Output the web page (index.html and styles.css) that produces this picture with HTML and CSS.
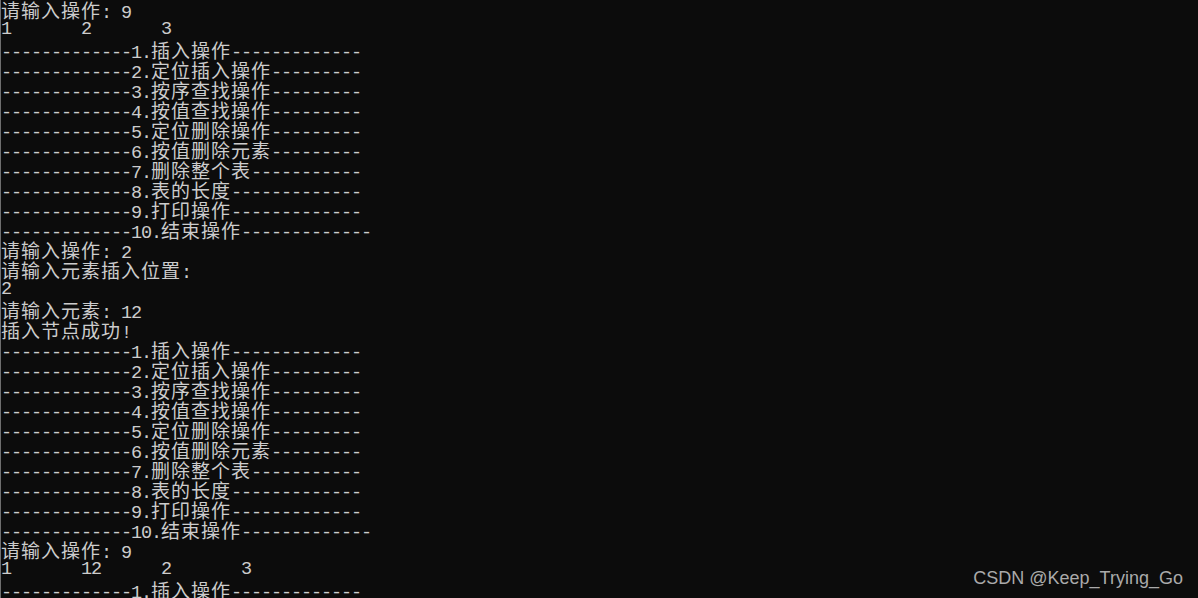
FILE: index.html
```html
<!DOCTYPE html>
<html lang="zh-CN">
<head>
    <meta charset="UTF-8">
    <title>控制台</title>
    <link rel="stylesheet" href="styles.css">
</head>
<body>
    <div class="console">
        <div class="line"><span class="cn">请输入操作</span>: 9</div>
        <div class="line">1       2       3</div>
        <!-- menu -->
        <div class="line">-------------1.<span class="cn">插入操作</span>-------------</div>
        <div class="line">-------------2.<span class="cn">定位插入操作</span>---------</div>
        <div class="line">-------------3.<span class="cn">按序查找操作</span>---------</div>
        <div class="line">-------------4.<span class="cn">按值查找操作</span>---------</div>
        <div class="line">-------------5.<span class="cn">定位删除操作</span>---------</div>
        <div class="line">-------------6.<span class="cn">按值删除元素</span>---------</div>
        <div class="line">-------------7.<span class="cn">删除整个表</span>-----------</div>
        <div class="line">-------------8.<span class="cn">表的长度</span>-------------</div>
        <div class="line">-------------9.<span class="cn">打印操作</span>-------------</div>
        <div class="line">-------------10.<span class="cn">结束操作</span>-------------</div>
        <div class="line"><span class="cn">请输入操作</span>: 2</div>
        <div class="line"><span class="cn">请输入元素插入位置</span>:</div>
        <div class="line">2</div>
        <div class="line"><span class="cn">请输入元素</span>: 12</div>
        <div class="line"><span class="cn">插入节点成功</span>!</div>
        <!-- menu again -->
        <div class="line">-------------1.<span class="cn">插入操作</span>-------------</div>
        <div class="line">-------------2.<span class="cn">定位插入操作</span>---------</div>
        <div class="line">-------------3.<span class="cn">按序查找操作</span>---------</div>
        <div class="line">-------------4.<span class="cn">按值查找操作</span>---------</div>
        <div class="line">-------------5.<span class="cn">定位删除操作</span>---------</div>
        <div class="line">-------------6.<span class="cn">按值删除元素</span>---------</div>
        <div class="line">-------------7.<span class="cn">删除整个表</span>-----------</div>
        <div class="line">-------------8.<span class="cn">表的长度</span>-------------</div>
        <div class="line">-------------9.<span class="cn">打印操作</span>-------------</div>
        <div class="line">-------------10.<span class="cn">结束操作</span>-------------</div>
        <div class="line"><span class="cn">请输入操作</span>: 9</div>
        <div class="line">1       12      2       3</div>
        <div class="line">-------------1.<span class="cn">插入操作</span>-------------</div>
    </div>
    <div class="watermark">CSDN @Keep_Trying_Go</div>
</body>
</html>
```

FILE: styles.css
```css
/* console window */
html, body {
    height: 100%;
}
body {
    margin: 0;
    background: #0c0c0c;
    overflow: hidden;
}
.console {
    height: 100%;
    border-left: 1px solid #6e6e6e;
    font-family: "Liberation Mono", monospace;
    font-size: 18.5px;
    letter-spacing: -1.1px;
    color: #cccccc;
}
.line {
    height: 20px;
    line-height: 20px;
    white-space: pre;
}
.cn {
    font-family: "Noto Sans CJK SC", sans-serif;
    font-size: 19px;
    letter-spacing: 1px;
    line-height: 20px;
}
/* CSDN watermark */
.watermark {
    position: absolute;
    right: 15px;
    bottom: 9px;
    font-family: "Liberation Sans", Arial, sans-serif;
    font-size: 18px;
    letter-spacing: 0;
    color: #aaaaaa;
}
```
